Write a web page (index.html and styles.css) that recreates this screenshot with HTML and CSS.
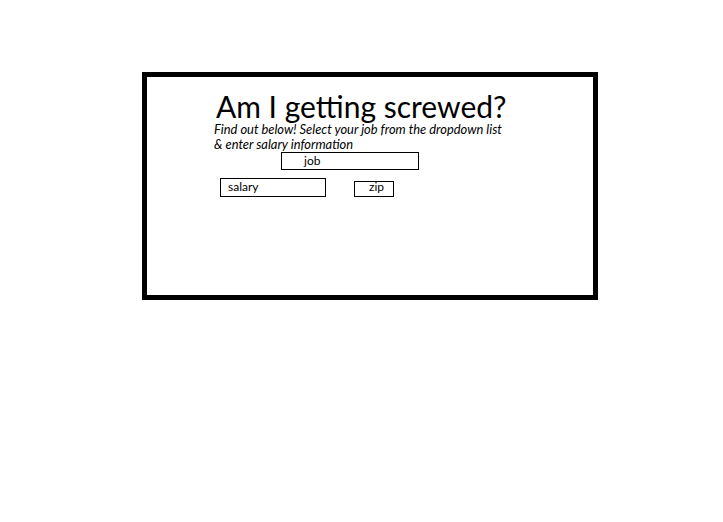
FILE: index.html
```html
<!DOCTYPE html>
<html lang="en">
<head>
    <meta charset="UTF-8">
    <meta name="viewport" content="width=device-width, initial-scale=1.0">
    <title>Am I getting screwed?</title>
    <link rel="stylesheet" href="styles.css">
</head>
<body>
    <div class="frame">
        <div class="content">
            <h1 class="title">Am I getting screwed?</h1>
            <p class="intro">Find out below! Select your job from the dropdown list<br>&amp; enter salary information</p>
            <div class="job-row">
                <div class="field job">job</div>
            </div>
            <div class="pay-row">
                <div class="field salary">salary</div>
                <div class="field zip">zip</div>
            </div>
        </div>
    </div>
</body>
</html>
```

FILE: styles.css
```css
body {
    margin: 0;
    background: white;
    font-family: Lato, "Open Sans", sans-serif;
    color: black;
}
.frame {
    margin: 72px 0 0 142px;
    width: 446px;
    height: 218px;
    border: 5px solid black;
}
.content {
    padding: 13px 0 0 67px;
}
.title {
    margin: 0 0 0 2px;
    font-size: 30px;
    font-weight: normal;
    line-height: 32px;
}
.intro {
    margin: 0;
    font-size: 12.9px;
    font-style: italic;
    line-height: 15px;
}
.job-row {
    padding: 0 0 0 67px;
}
.field {
    border: 1px solid black;
    font-size: 12px;
    box-sizing: border-box;
}
.job {
    width: 138px;
    height: 18px;
    line-height: 15px;
    padding-left: 22px;
}
.pay-row {
    display: flex;
    align-items: flex-start;
    padding: 8px 0 0 6px;
}
.salary {
    width: 106px;
    height: 19px;
    line-height: 16px;
    padding-left: 7px;
}
.zip {
    margin: 3px 0 0 28px;
    width: 40px;
    height: 16px;
    line-height: 10px;
    padding-left: 14px;
}
```
